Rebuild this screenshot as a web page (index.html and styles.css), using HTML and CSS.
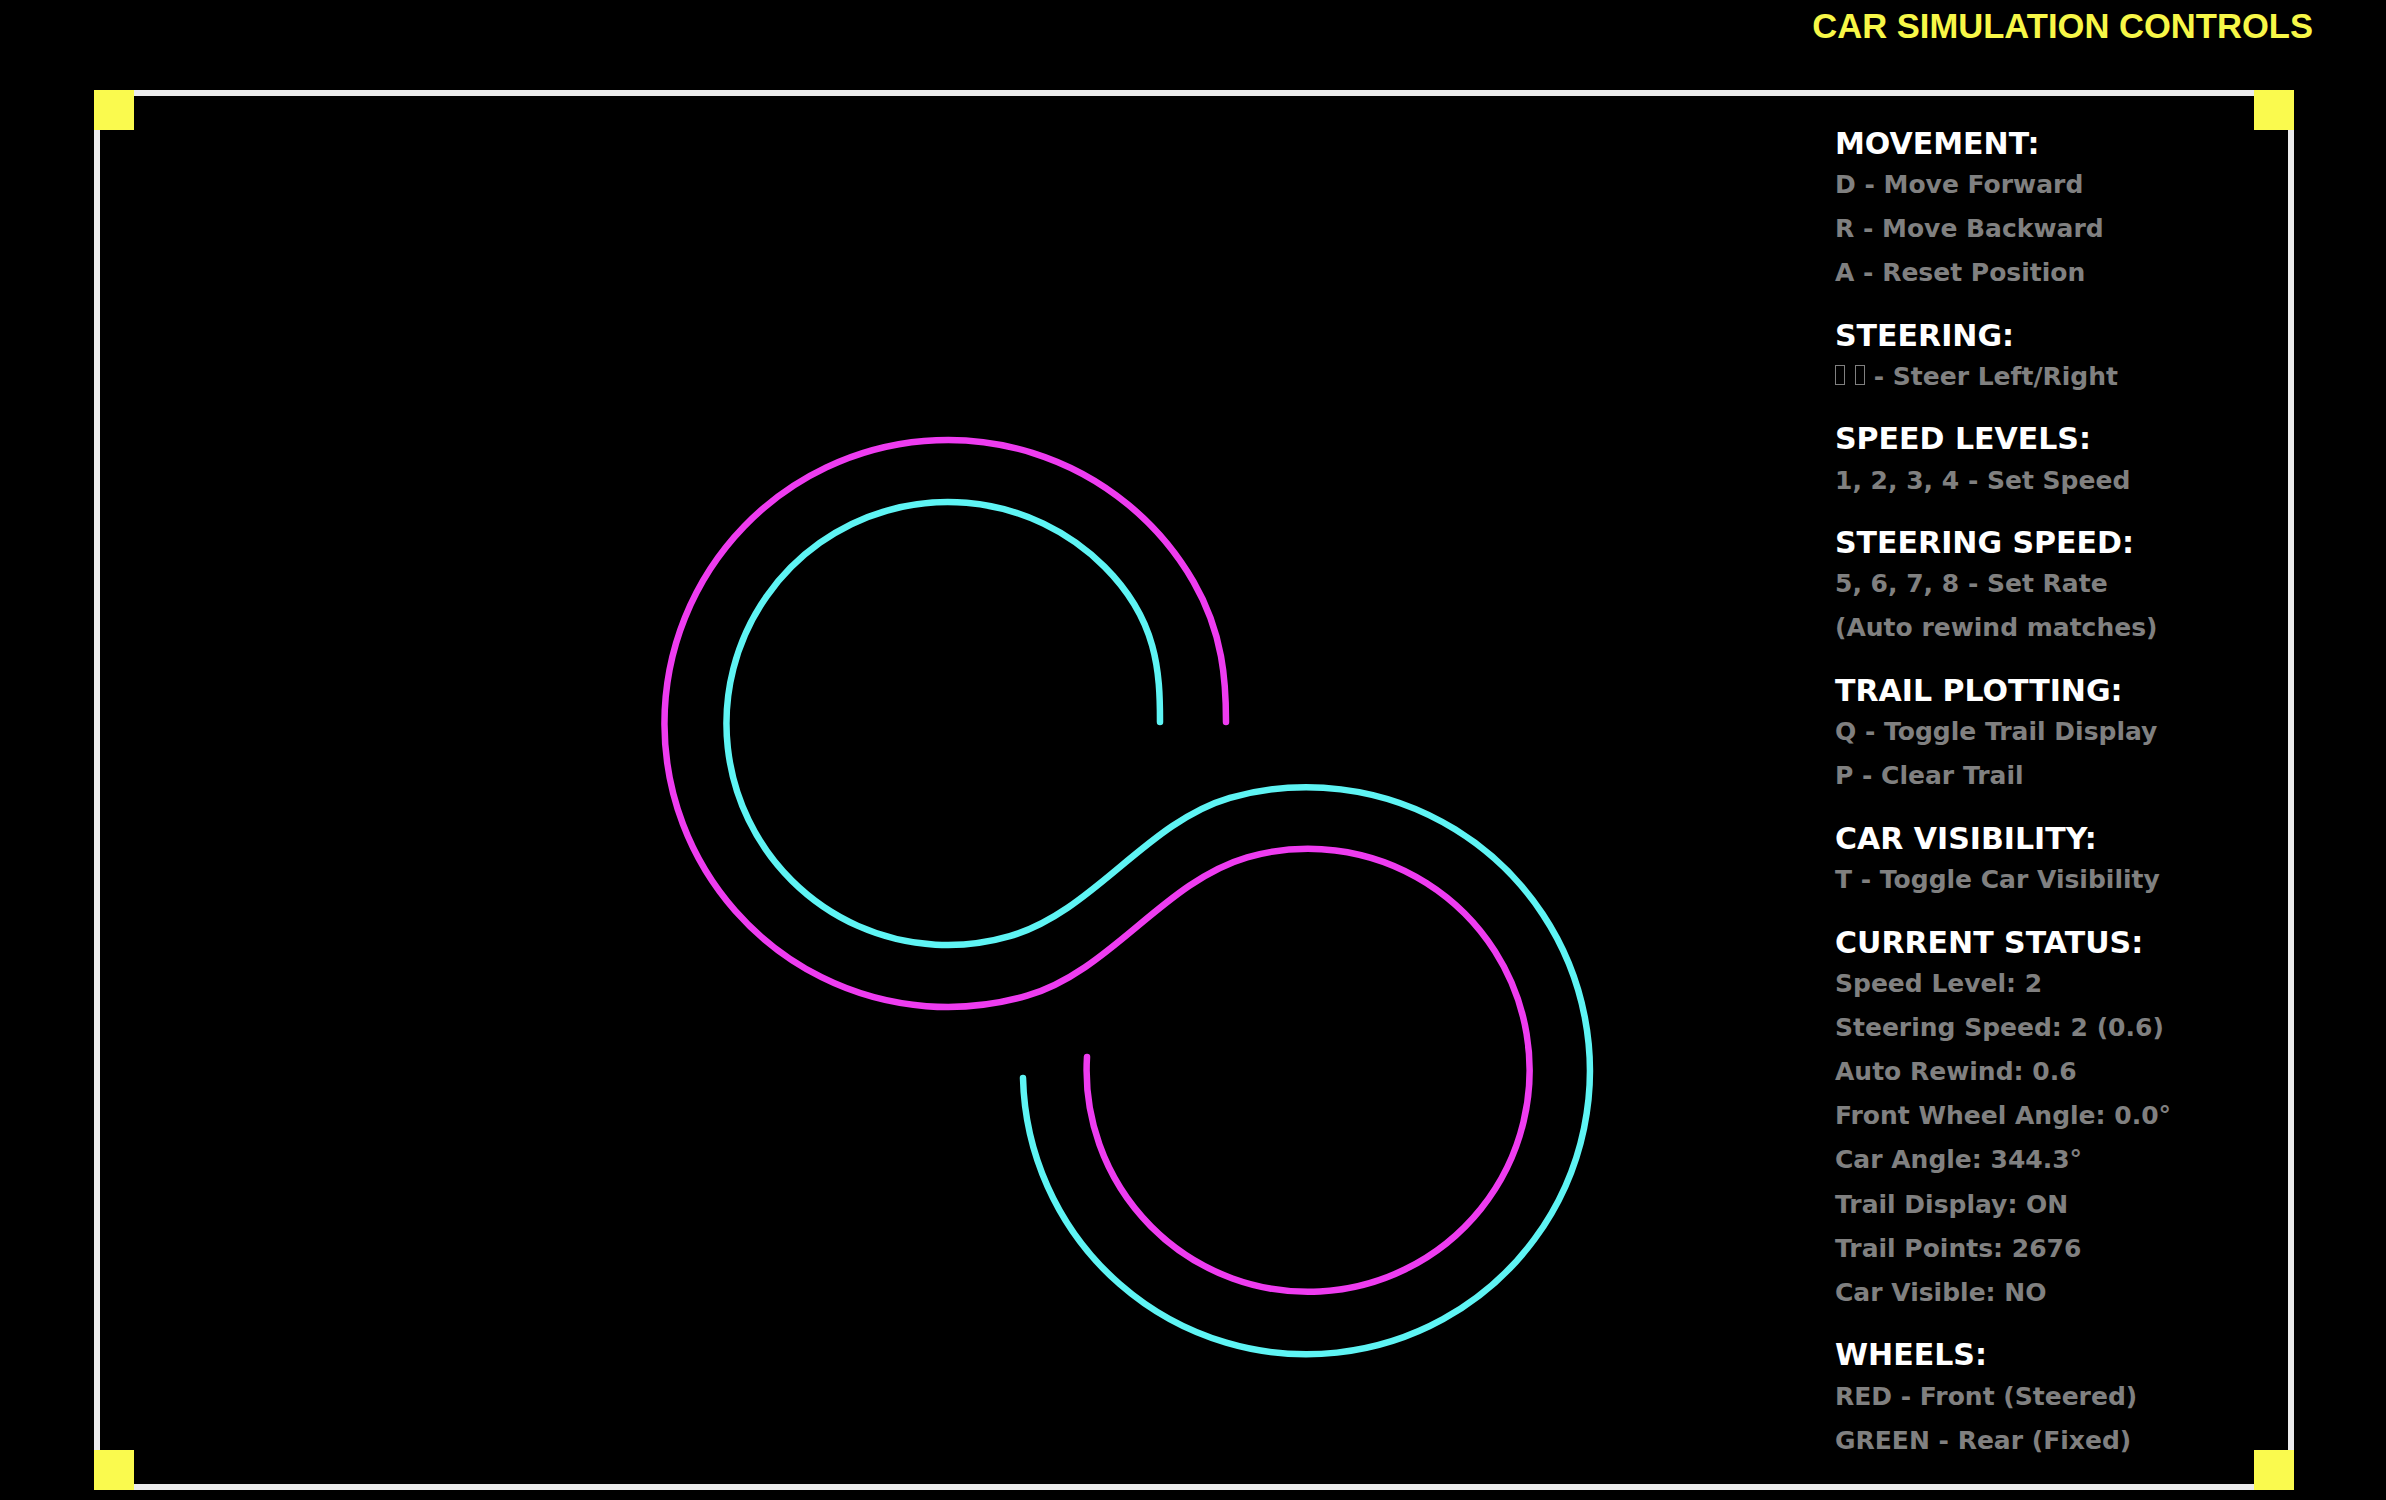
FILE: index.html
```html
<!DOCTYPE html>
<html lang="en">
<head>
<meta charset="utf-8">
<title>Car Simulation</title>
<link rel="stylesheet" href="styles.css">
</head>
<body>
<header class="topbar">
  <h1 class="title">CAR SIMULATION CONTROLS</h1>
</header>
<main class="frame">
  <span class="corner tl"></span>
  <span class="corner tr"></span>
  <span class="corner bl"></span>
  <span class="corner br"></span>
  <svg class="track" width="1735" height="1388" viewBox="100 96 1735 1388" xmlns="http://www.w3.org/2000/svg">
    <path class="trail magenta" d="M 1226 722 C 1226 682 1223.5 633.7 1193.5 581.75 A 283.5 283.5 0 1 0 1027.1 995.7 C 1110.6 971.4 1163.7 881.6 1247.2 857.3 A 221.5 221.5 0 1 1 1087 1057"/>
    <path class="trail cyan" d="M 1160 722 C 1160 672 1157.6 619.9 1104.6 566.9 A 221.5 221.5 0 1 0 1009.8 936.2 C 1093.3 911.9 1146.4 822.1 1229.9 797.8 A 283.5 283.5 0 1 1 1023 1078"/>
  </svg>
  <aside class="panel">
    <section class="group">
      <h2 class="head">MOVEMENT:</h2>
      <p class="item">D - Move Forward</p>
      <p class="item">R - Move Backward</p>
      <p class="item">A - Reset Position</p>
    </section>
    <section class="group">
      <h2 class="head">STEERING:</h2>
      <p class="item"><span class="tofu tofu-first" aria-label="←"></span><span class="tofu" aria-label="→"></span> - Steer Left/Right</p>
    </section>
    <section class="group">
      <h2 class="head">SPEED LEVELS:</h2>
      <p class="item">1, 2, 3, 4 - Set Speed</p>
    </section>
    <section class="group">
      <h2 class="head">STEERING SPEED:</h2>
      <p class="item">5, 6, 7, 8 - Set Rate</p>
      <p class="item">(Auto rewind matches)</p>
    </section>
    <section class="group">
      <h2 class="head">TRAIL PLOTTING:</h2>
      <p class="item">Q - Toggle Trail Display</p>
      <p class="item">P - Clear Trail</p>
    </section>
    <section class="group">
      <h2 class="head">CAR VISIBILITY:</h2>
      <p class="item">T - Toggle Car Visibility</p>
    </section>
    <section class="group">
      <h2 class="head">CURRENT STATUS:</h2>
      <p class="item">Speed Level: 2</p>
      <p class="item">Steering Speed: 2 (0.6)</p>
      <p class="item">Auto Rewind: 0.6</p>
      <p class="item">Front Wheel Angle: 0.0°</p>
      <p class="item">Car Angle: 344.3°</p>
      <p class="item">Trail Display: ON</p>
      <p class="item">Trail Points: 2676</p>
      <p class="item">Car Visible: NO</p>
    </section>
    <section class="group">
      <h2 class="head">WHEELS:</h2>
      <p class="item">RED - Front (Steered)</p>
      <p class="item">GREEN - Rear (Fixed)</p>
    </section>
  </aside>
</main>
</body>
</html>
```

FILE: styles.css
```css
html, body {
  margin: 0;
  padding: 0;
  background: #000;
}

body {
  width: 2386px;
  height: 1500px;
  overflow: hidden;
}

.topbar {
  height: 90px;
  box-sizing: border-box;
  display: flex;
  justify-content: flex-end;
  padding-right: 73px;
}

.title {
  margin: 0;
  padding-top: 9px;
  font-family: "Liberation Sans", Arial, sans-serif;
  font-weight: bold;
  font-size: 34.6px;
  line-height: 34px;
  color: #f7f747;
  white-space: nowrap;
}

.frame {
  position: relative;
  margin-left: 94px;
  width: 2200px;
  height: 1400px;
  box-sizing: border-box;
  border: 6px solid #ececec;
  display: grid;
  grid-template-columns: 1735px 1fr;
}

.corner {
  position: absolute;
  width: 40px;
  height: 40px;
  background: #fafa4e;
}

.tl { top: -6px; left: -6px; }
.tr { top: -6px; right: -6px; }
.bl { bottom: -6px; left: -6px; }
.br { bottom: -6px; right: -6px; }

.track {
  display: block;
}

.trail {
  fill: none;
  stroke-width: 6.5;
  stroke-linecap: round;
  stroke-linejoin: round;
}

.magenta { stroke: #ee3cf0; }
.cyan { stroke: #5ef4f4; }

.panel {
  padding-top: 28.5px;
  font-family: "DejaVu Sans", sans-serif;
  font-weight: bold;
}

.group + .group {
  margin-top: 21.6px;
}

.head {
  margin: 0;
  font-size: 30px;
  line-height: 38.16px;
  font-weight: bold;
  color: #ffffff;
  white-space: nowrap;
}

.item {
  margin: 0;
  font-size: 25px;
  line-height: 44.1px;
  color: #808080;
  white-space: nowrap;
}

.tofu {
  display: inline-block;
  box-sizing: border-box;
  width: 10px;
  height: 20px;
  border: 1.5px solid #808080;
  vertical-align: baseline;
}

.tofu-first {
  margin-right: 10px;
}
```
